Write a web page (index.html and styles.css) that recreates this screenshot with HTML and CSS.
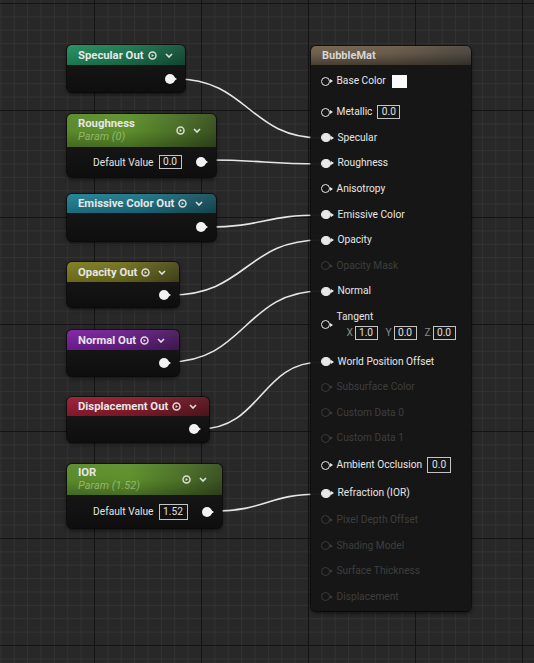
FILE: index.html
```html
<!DOCTYPE html>
<html>
<head>
<meta charset="utf-8">
<link rel="stylesheet" href="styles.css">
</head>
<body>
<div class="canvas">
  <svg class="wires" width="534" height="663" viewBox="0 0 534 663">
    <path d="M176 79 C248 79 249 138 321 138"/>
    <path d="M207 160 C264 160 264 164 321 164"/>
    <path d="M207 227 C264 227 264 215 321 215"/>
    <path d="M171 295 C246 295 246 240 321 240"/>
    <path d="M169 362 C245 362 245 291 321 291"/>
    <path d="M200 429 C261 429 261 362 321 362"/>
    <path d="M213 511 C267 511 267 494 321 494"/>
  </svg>

  <div class="node n-spec">
    <div class="hdr h-green"><span class="ttl">Specular Out</span><svg class="play" width="9" height="9" viewBox="0 0 9 9"><circle cx="4.5" cy="4.5" r="3.5"/><path d="M3.6 2.9 L6 4.5 L3.6 6.1Z"/></svg><svg class="chev" width="8" height="5" viewBox="0 0 8 5"><path d="M1 1 L4 4 L7 1"/></svg></div>
    <div class="obody"><span class="opin"></span></div>
  </div>

  <div class="node n-rough">
    <div class="hdr tall h-leaf"><div class="ttlbox"><span class="ttl">Roughness</span><span class="sub">Param (0)</span></div><svg class="play" width="9" height="9" viewBox="0 0 9 9"><circle cx="4.5" cy="4.5" r="3.5"/><path d="M3.6 2.9 L6 4.5 L3.6 6.1Z"/></svg><svg class="chev" width="8" height="5" viewBox="0 0 8 5"><path d="M1 1 L4 4 L7 1"/></svg></div>
    <div class="obody pbody"><span class="lbl">Default Value</span><span class="val">0.0</span><span class="opin"></span></div>
  </div>

  <div class="node n-emis">
    <div class="hdr h-teal"><span class="ttl">Emissive Color Out</span><svg class="play" width="9" height="9" viewBox="0 0 9 9"><circle cx="4.5" cy="4.5" r="3.5"/><path d="M3.6 2.9 L6 4.5 L3.6 6.1Z"/></svg><svg class="chev" width="8" height="5" viewBox="0 0 8 5"><path d="M1 1 L4 4 L7 1"/></svg></div>
    <div class="obody"><span class="opin"></span></div>
  </div>

  <div class="node n-opac">
    <div class="hdr h-olive"><span class="ttl">Opacity Out</span><svg class="play" width="9" height="9" viewBox="0 0 9 9"><circle cx="4.5" cy="4.5" r="3.5"/><path d="M3.6 2.9 L6 4.5 L3.6 6.1Z"/></svg><svg class="chev" width="8" height="5" viewBox="0 0 8 5"><path d="M1 1 L4 4 L7 1"/></svg></div>
    <div class="obody"><span class="opin"></span></div>
  </div>

  <div class="node n-norm">
    <div class="hdr h-purple"><span class="ttl">Normal Out</span><svg class="play" width="9" height="9" viewBox="0 0 9 9"><circle cx="4.5" cy="4.5" r="3.5"/><path d="M3.6 2.9 L6 4.5 L3.6 6.1Z"/></svg><svg class="chev" width="8" height="5" viewBox="0 0 8 5"><path d="M1 1 L4 4 L7 1"/></svg></div>
    <div class="obody"><span class="opin"></span></div>
  </div>

  <div class="node n-disp">
    <div class="hdr h-red"><span class="ttl">Displacement Out</span><svg class="play" width="9" height="9" viewBox="0 0 9 9"><circle cx="4.5" cy="4.5" r="3.5"/><path d="M3.6 2.9 L6 4.5 L3.6 6.1Z"/></svg><svg class="chev" width="8" height="5" viewBox="0 0 8 5"><path d="M1 1 L4 4 L7 1"/></svg></div>
    <div class="obody"><span class="opin"></span></div>
  </div>

  <div class="node n-ior">
    <div class="hdr tall h-leaf"><div class="ttlbox"><span class="ttl">IOR</span><span class="sub">Param (1.52)</span></div><svg class="play" width="9" height="9" viewBox="0 0 9 9"><circle cx="4.5" cy="4.5" r="3.5"/><path d="M3.6 2.9 L6 4.5 L3.6 6.1Z"/></svg><svg class="chev" width="8" height="5" viewBox="0 0 8 5"><path d="M1 1 L4 4 L7 1"/></svg></div>
    <div class="obody pbody"><span class="lbl">Default Value</span><span class="val wide">1.52</span><span class="opin"></span></div>
  </div>

  <div class="node mat">
    <div class="mhdr">BubbleMat</div>
    <div class="mbody">
      <div class="mrow r-first"><span class="pin"></span><span class="mlbl">Base Color</span><span class="swatch"></span></div>
      <div class="mrow r-metal"><span class="pin"></span><span class="mlbl">Metallic</span><span class="val">0.0</span></div>
      <div class="mrow"><span class="pin fill"></span><span class="mlbl">Specular</span></div>
      <div class="mrow"><span class="pin fill"></span><span class="mlbl">Roughness</span></div>
      <div class="mrow"><span class="pin"></span><span class="mlbl">Anisotropy</span></div>
      <div class="mrow"><span class="pin fill"></span><span class="mlbl">Emissive Color</span></div>
      <div class="mrow"><span class="pin fill"></span><span class="mlbl">Opacity</span></div>
      <div class="mrow off"><span class="pin"></span><span class="mlbl">Opacity Mask</span></div>
      <div class="mrow"><span class="pin fill"></span><span class="mlbl">Normal</span></div>
      <div class="mrow r-tan"><span class="pin"></span>
        <div class="tancol">
          <span class="mlbl">Tangent</span>
          <div class="xyz">
            <span class="axis">X</span><span class="val">1.0</span>
            <span class="axis ay">Y</span><span class="val">0.0</span>
            <span class="axis ay">Z</span><span class="val">0.0</span>
          </div>
        </div>
      </div>
      <div class="mrow"><span class="pin fill"></span><span class="mlbl">World Position Offset</span></div>
      <div class="mrow off"><span class="pin"></span><span class="mlbl">Subsurface Color</span></div>
      <div class="mrow off"><span class="pin"></span><span class="mlbl">Custom Data 0</span></div>
      <div class="mrow off"><span class="pin"></span><span class="mlbl">Custom Data 1</span></div>
      <div class="mrow r-big"><span class="pin"></span><span class="mlbl">Ambient Occlusion</span><span class="val tallv">0.0</span></div>
      <div class="mrow r-big"><span class="pin fill"></span><span class="mlbl">Refraction (IOR)</span></div>
      <div class="mrow off"><span class="pin"></span><span class="mlbl">Pixel Depth Offset</span></div>
      <div class="mrow off"><span class="pin"></span><span class="mlbl">Shading Model</span></div>
      <div class="mrow off"><span class="pin"></span><span class="mlbl">Surface Thickness</span></div>
      <div class="mrow off"><span class="pin"></span><span class="mlbl">Displacement</span></div>
    </div>
  </div>
</div>
</body>
</html>
```
FILE: styles.css
```css
html, body {
  margin: 0;
  padding: 0;
  background: #272727;
}
body {
  font-family: Roboto, "Liberation Sans", sans-serif;
  color: #e4e4e4;
}
.canvas {
  position: relative;
  width: 534px;
  height: 663px;
  overflow: hidden;
  background-color: #282828;
  background-image:
    linear-gradient(to right, #141414 0 1px, transparent 1px),
    linear-gradient(to bottom, #141414 0 1px, transparent 1px),
    linear-gradient(to right, #333333 0 1px, transparent 1px),
    linear-gradient(to bottom, #333333 0 1px, transparent 1px);
  background-size: 107px 107px, 107px 107px, 13.375px 13.375px, 13.375px 13.375px;
  background-position: 94px 3px, 94px 3px, 94px 3px, 94px 3px;
}
.wires {
  position: absolute;
  left: 0;
  top: 0;
  z-index: 1;
}
.wires path {
  fill: none;
  stroke: #e6e6e6;
  stroke-width: 1.6;
}

/* generic node */
.node {
  position: absolute;
  z-index: 2;
  border-radius: 5px;
  background: #101010;
  box-shadow: 0 2px 4px rgba(0, 0, 0, 0.65), 0 0 0 1px rgba(0, 0, 0, 0.5);
}
.hdr {
  height: 20px;
  box-sizing: border-box;
  border-radius: 5px 5px 0 0;
  display: flex;
  align-items: center;
  padding: 0 15px 0 11px;
}
.hdr.tall {
  height: 33px;
}
.ttl {
  font-size: 11.3px;
  font-weight: 700;
  color: #e6e6e6;
  white-space: nowrap;
  line-height: 13px;
}
.ttlbox {
  display: flex;
  flex-direction: column;
  flex: 1;
}
.sub {
  font-size: 11px;
  font-style: italic;
  color: rgba(190, 220, 150, 0.6);
  line-height: 14px;
  white-space: nowrap;
}
.play {
  margin-left: 4px;
  flex: none;
}
.play circle {
  fill: none;
  stroke: #dcdcdc;
  stroke-width: 1.5;
}
.play path {
  fill: #dcdcdc;
}
.chev {
  margin-left: 8px;
  flex: none;
}
.chev path {
  fill: none;
  stroke: #e0e0e0;
  stroke-width: 1.6;
}

.h-green {
  background: linear-gradient(to bottom, rgba(255,255,255,0.06), rgba(0,0,0,0.15)),
              linear-gradient(to right, #1f8c5d 0%, #1a7a51 45%, #135139 100%);
}
.h-leaf {
  background: linear-gradient(to bottom, rgba(255,255,255,0.04) 0%, rgba(0,0,0,0) 50%, rgba(0,0,0,0.25) 100%),
              linear-gradient(to right, #5a8a2b 0%, #5e902d 40%, #4a6e27 75%, #3a5222 100%);
}
.h-teal {
  background: linear-gradient(to bottom, rgba(255,255,255,0.06), rgba(0,0,0,0.15)),
              linear-gradient(to right, #1e7f92 0%, #1b7284 50%, #174e59 100%);
}
.h-olive {
  background: linear-gradient(to bottom, rgba(255,255,255,0.06), rgba(0,0,0,0.15)),
              linear-gradient(to right, #7c7c1c 0%, #70701c 50%, #4a4a1c 100%);
}
.h-purple {
  background: linear-gradient(to bottom, rgba(255,255,255,0.06), rgba(0,0,0,0.15)),
              linear-gradient(to right, #7b1ea0 0%, #6c1c8c 50%, #47195c 100%);
}
.h-red {
  background: linear-gradient(to bottom, rgba(255,255,255,0.05), rgba(0,0,0,0.15)),
              linear-gradient(to right, #9a1b31 0%, #891a2c 50%, #58161f 100%);
}

.obody {
  display: flex;
  align-items: center;
  justify-content: flex-end;
  padding-right: 8px;
  border-radius: 0 0 5px 5px;
  background: linear-gradient(to bottom, #151515, #0e0e0e);
}
.opin {
  display: inline-flex;
  align-items: center;
  flex: none;
}
.opin::before {
  content: "";
  width: 10px;
  height: 10px;
  border-radius: 50%;
  background: #f2f2f2;
}
.opin::after {
  content: "";
  border-left: 3px solid #f2f2f2;
  border-top: 2.5px solid transparent;
  border-bottom: 2.5px solid transparent;
  margin-left: -0.5px;
}
.pbody .lbl {
  font-size: 10.2px;
  color: #e2e2e2;
  margin-right: 5px;
  white-space: nowrap;
}
.pbody .val {
  margin-right: 14px;
}
.val {
  box-sizing: border-box;
  height: 14px;
  min-width: 23px;
  border: 1px solid #c4c4c4;
  font-size: 10.2px;
  line-height: 12px;
  text-align: center;
  color: #e0e0e0;
  padding: 0 3px;
  flex: none;
}
.val.wide { min-width: 29px; height: 16px; line-height: 14px; }
.val.tallv { height: 16px; line-height: 14px; min-width: 24px; }

.n-spec  { left: 67px; top: 45px;  width: 118px; }
.n-spec .obody { height: 27px; }
.n-rough { left: 67px; top: 114px; width: 149px; }
.n-rough .obody { height: 30px; }
.n-emis  { left: 67px; top: 194px; width: 149px; }
.n-emis .hdr { height: 19px; }
.n-emis .obody { height: 28px; }
.n-opac  { left: 67px; top: 262px; width: 112px; }
.n-opac .obody { height: 25px; }
.n-norm  { left: 67px; top: 330px; width: 112px; }
.n-norm .obody { height: 26px; }
.n-disp  { left: 67px; top: 397px; width: 142px; }
.n-disp .hdr { height: 19px; }
.n-disp .obody { height: 26px; }
.n-ior   { left: 67px; top: 464px; width: 155px; }
.n-ior .hdr { height: 31px; }
.n-ior .obody { height: 33px; }

/* material node */
.mat {
  left: 311px;
  top: 46px;
  width: 160px;
  background: rgba(22, 22, 22, 0.97);
  border-radius: 5px;
}
.mhdr {
  height: 19px;
  box-sizing: border-box;
  padding-left: 11px;
  display: flex;
  align-items: center;
  font-size: 11px;
  font-weight: 700;
  color: #d6d6d6;
  border-radius: 5px 5px 0 0;
  background: linear-gradient(to bottom, rgba(255,255,255,0.05) 0%, rgba(0,0,0,0) 40%, rgba(0,0,0,0.35) 100%),
              linear-gradient(to right, #6f604d 0%, #685a49 50%, #4c463e 100%);
}
.mbody {
  padding-top: 3px;
  padding-bottom: 1px;
}
.mrow {
  height: 25.6px;
  display: flex;
  align-items: center;
  padding-left: 10px;
  color: #e6e6e6;
}
.mrow.r-first { height: 26px; }
.mrow.r-metal { height: 26px; margin-top: 5px; }
.mrow.r-tan { height: 44.6px; padding-bottom: 3px; box-sizing: border-box; }
.mrow.r-big { height: 28px; }
.mrow.off { color: #3e3e3e; }
.mlbl {
  font-size: 10.2px;
  white-space: nowrap;
  margin-right: 5px;
  line-height: 14px;
}
.pin {
  display: inline-flex;
  align-items: center;
  flex: none;
  margin-right: 4px;
  color: #e8e8e8;
}
.off .pin { color: #3a3a3a; }
.pin::before {
  content: "";
  box-sizing: border-box;
  width: 9px;
  height: 9px;
  border-radius: 50%;
  border: 1.6px solid currentColor;
}
.pin.fill::before {
  background: currentColor;
  width: 10px;
}
.pin::after {
  content: "";
  border-left: 3px solid currentColor;
  border-top: 2.5px solid transparent;
  border-bottom: 2.5px solid transparent;
  margin-left: -0.5px;
}
.swatch {
  width: 15px;
  height: 13px;
  background: #fafafa;
  margin-left: 1px;
}
.tancol {
  display: flex;
  flex-direction: column;
}
.xyz {
  display: flex;
  align-items: center;
  margin-top: 2px;
  padding-left: 10px;
}
.axis {
  font-size: 10.2px;
  color: #8a8a8a;
  margin-right: 3px;
  width: 5px;
}
.axis.ay { margin-left: 8px; }
```
